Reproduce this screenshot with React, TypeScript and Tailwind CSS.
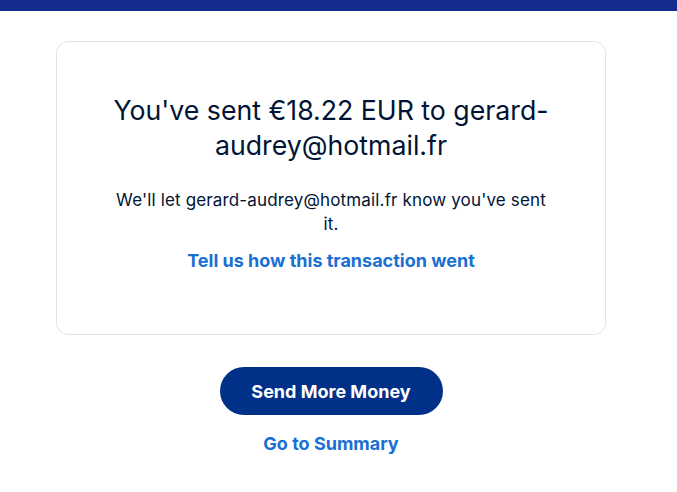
import React from "react";

export default function App() {
  return (
    <div className="min-h-[492px] bg-white" style={{ fontFamily: "Inter, 'Noto Sans', sans-serif" }}>
      <div className="h-[11px] w-full bg-[#142c8e]" />
      <div className="w-[662px] flex flex-col items-center pt-[30px]">
        <div className="w-[550px] rounded-[12px] border border-[#e3e3e3] px-[52px] pt-[51px] pb-[61px] flex flex-col items-center text-center">
          <h1 className="text-[26.7px] leading-[35px] font-normal text-[#001435]">
            You've sent €18.22 EUR to gerard-audrey@hotmail.fr
          </h1>
          <p className="mt-[25px] text-[17px] leading-[24px] tracking-[0.15px] text-[#001435]">
            We'll let gerard-audrey@hotmail.fr know you've sent it.
          </p>
          <a className="mt-[13px] text-[18px] leading-[24px] font-bold text-[#1a6fd3]">
            Tell us how this transaction went
          </a>
        </div>
        <button className="mt-[32px] h-[48px] w-[223px] rounded-full bg-[#003087] text-white text-[18px] font-bold">
          Send More Money
        </button>
        <a className="mt-[17px] text-[18px] leading-[24px] font-bold text-[#1a6fd3]">Go to Summary</a>
      </div>
    </div>
  );
}
